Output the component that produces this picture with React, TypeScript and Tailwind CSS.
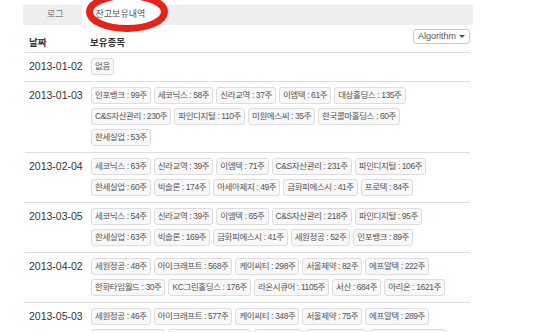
type Row = { date: string; items: string[] };

const rows: Row[] = [
  { date: '2013-01-02', items: ['없음'] },
  {
    date: '2013-01-03',
    items: [
      '인포뱅크 : 99주', '세코닉스 : 58주', '신라교역 : 37주', '이엠텍 : 61주', '대상홀딩스 : 135주',
      'C&S자산관리 : 230주', '파인디지털 : 110주', '미원에스씨 : 35주', '한국콜마홀딩스 : 60주',
      '한세실업 : 53주',
    ],
  },
  {
    date: '2013-02-04',
    items: [
      '세코닉스 : 63주', '신라교역 : 39주', '이엠텍 : 71주', 'C&S자산관리 : 231주', '파인디지털 : 106주',
      '한세실업 : 60주', '빅솔론 : 174주', '아세아제지 : 49주', '금화피에스시 : 41주', '프로텍 : 84주',
    ],
  },
  {
    date: '2013-03-05',
    items: [
      '세코닉스 : 54주', '신라교역 : 39주', '이엠텍 : 65주', 'C&S자산관리 : 218주', '파인디지털 : 95주',
      '한세실업 : 63주', '빅솔론 : 169주', '금화피에스시 : 41주', '세원정공 : 52주', '인포뱅크 : 89주',
    ],
  },
  {
    date: '2013-04-02',
    items: [
      '세원정공 : 48주', '아이크래프트 : 568주', '케이씨티 : 298주', '서울제약 : 82주', '에프알텍 : 222주',
      '한화타임월드 : 30주', 'KC그린홀딩스 : 176주', '라온시큐어 : 1105주', '서산 : 684주', '아리온 : 1621주',
    ],
  },
  {
    date: '2013-05-03',
    items: [
      '세원정공 : 46주', '아이크래프트 : 577주', '케이씨티 : 348주', '서울제약 : 75주', '에프알텍 : 289주',
      '한화타임월드 : 27주', 'KC그린홀딩스 : 158주', '서산 : 621주', '아리온 : 1469주', '라온시큐어 : 1020주',
    ],
  },
];

export default function App() {
  return (
    <div className="relative w-[534px] h-[332px] overflow-hidden bg-white font-['Liberation_Sans','Noto_Sans_CJK_KR',sans-serif]">
      <div className="ml-[23px] w-[450px]">
        {/* 탭 */}
        <div className="mt-[5px] h-[20px] bg-[#eeeeee] flex items-stretch text-[9px]">
          <div className="ml-[10px] px-[14px] flex items-center text-[#777]">로그</div>
          <div className="ml-[4px] px-[14px] flex items-center bg-white text-[#555]">잔고보유내역</div>
        </div>

        <div className="ml-[2px] w-[445px]">
          {/* 헤더 */}
          <div className="mt-[4px] h-[24px] flex border-b border-[#dddddd]">
            <div className="w-[64px] pl-[4px] pb-[3px] flex items-end text-[9.5px] font-bold text-[#333] leading-[12px]">날짜</div>
            <div className="pl-[1px] pb-[3px] flex items-end text-[9.5px] font-bold text-[#333] leading-[12px]">보유종목</div>
            <button className="ml-auto self-start h-[15px] px-[4px] flex items-center gap-[3px] border border-[#cccccc] rounded-[3px] bg-white text-[9px] text-[#555]">
              Algorithm
              <span className="w-0 h-0 border-l-[3px] border-r-[3px] border-t-[3px] border-l-transparent border-r-transparent border-t-[#555]" />
            </button>
          </div>

          {/* 행 */}
          {rows.map((row) => (
            <div key={row.date} className="flex border-b border-[#dddddd] pt-[5px] pb-[6px]">
              <div className="w-[66px] shrink-0 pl-[4px] text-[10.5px] leading-[17px] text-[#333]">{row.date}</div>
              <div className="flex-1 pr-[12px] flex flex-wrap gap-x-[3px] gap-y-[4px]">
                {row.items.map((item, i) => (
                  <span
                    key={i}
                    className="h-[17px] px-[3px] inline-flex items-center whitespace-pre border border-[#dddddd] rounded-[3px] bg-[#f8f8f8] text-[8.5px] tracking-[-0.4px] text-[#555]"
                  >
                    {item}
                  </span>
                ))}
              </div>
            </div>
          ))}
        </div>
      </div>

      <svg className="absolute left-0 top-0 pointer-events-none" width="534" height="40">
        <ellipse cx="127" cy="12" rx="37.5" ry="16.5" fill="none" stroke="#e3241b" strokeWidth="7" />
      </svg>
    </div>
  );
}
